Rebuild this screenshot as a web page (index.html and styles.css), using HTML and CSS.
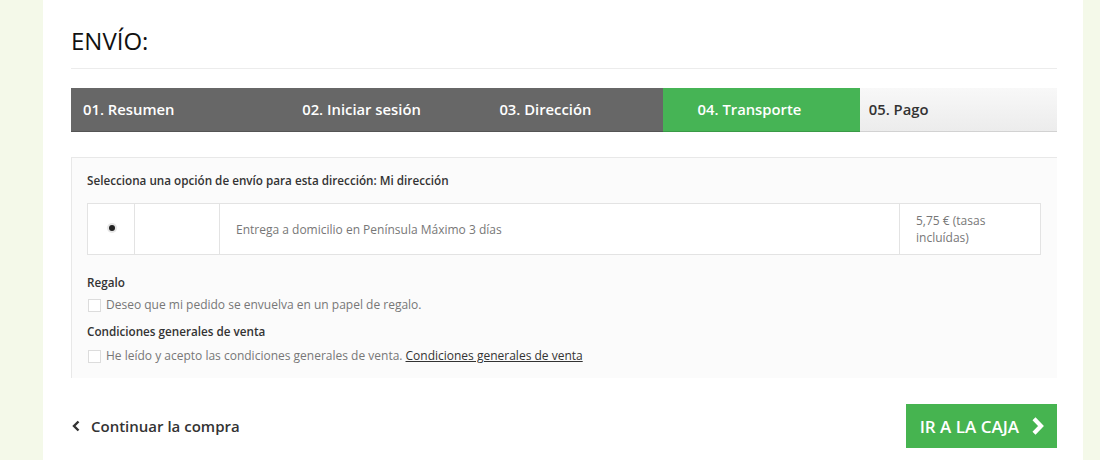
FILE: index.html
```html
<!DOCTYPE html>
<html lang="es">
<head>
  <meta charset="UTF-8" />
  <title>Envío</title>
  <link rel="stylesheet" href="styles.css">
</head>
<body>
  <div class="page">
    <h1 class="page-heading">ENVÍO:</h1>

    <ul class="steps">
      <li class="step step-first">01. Resumen</li>
      <li class="step">02. Iniciar sesión</li>
      <li class="step">03. Dirección</li>
      <li class="step step-current">04. Transporte</li>
      <li class="step step-todo">05. Pago</li>
    </ul>

    <div class="delivery-box">
      <p class="carrier-title">Selecciona una opción de envío para esta dirección: Mi dirección</p>

      <table class="carrier-table">
        <tr>
          <td class="col-radio"><span class="radio"></span></td>
          <td class="col-logo"></td>
          <td class="col-desc">Entrega a domicilio en Península Máximo 3 días</td>
          <td class="col-price">5,75 € (tasas incluídas)</td>
        </tr>
      </table>

      <p class="box-label">Regalo</p>
      <label class="check-row"><span class="checkbox"></span>Deseo que mi pedido se envuelva en un papel de regalo.</label>

      <p class="box-label">Condiciones generales de venta</p>
      <label class="check-row"><span class="checkbox"></span>He leído y acepto las condiciones generales de venta. <a href="#">Condiciones generales de venta</a></label>
    </div>

    <div class="cart-nav">
      <a class="back-link" href="#">
        <svg width="10" height="12" viewBox="0 0 10 12"><path d="M7.5 1.5 L3 6 L7.5 10.5" fill="none" stroke="#333" stroke-width="2.4"/></svg>
        Continuar la compra
      </a>
      <a class="checkout-btn" href="#">
        IR A LA CAJA
        <svg width="14" height="18" viewBox="0 0 14 18"><path d="M3 1.8 L10 9 L3 16.2" fill="none" stroke="#fff" stroke-width="4.2"/></svg>
      </a>
    </div>
  </div>
</body>
</html>
```

FILE: styles.css
```css
body {
  margin: 0;
  background: #f4f9e9;
  font-family: 'Open Sans', sans-serif;
  color: #333;
}

.page {
  margin-left: 43px;
  width: 1040px;
  height: 460px;
  box-sizing: border-box;
  padding: 0 26px 0 28px;
  background: #fff;
}

.page-heading {
  margin: 0;
  padding: 26px 0 12px;
  font-size: 24px;
  line-height: 30px;
  font-weight: 400;
  color: #111;
  border-bottom: 1px solid #ececec;
}

.steps {
  list-style: none;
  margin: 19px 0 0;
  padding: 0;
  display: flex;
}

.step {
  flex: 0 0 20%;
  box-sizing: border-box;
  height: 44px;
  line-height: 43px;
  padding-left: 34px;
  font-size: 14.8px;
  font-weight: 600;
  color: #fff;
  background: #676767;
  border-bottom: 1px solid #555;
  white-space: nowrap;
}

.step-first {
  padding-left: 12px;
}

.step-current {
  padding-left: 35px;
  background: #46b455;
  border-bottom-color: #3a9a47;
}

.step-todo {
  padding-left: 9px;
  color: #333;
  background: linear-gradient(#f8f8f8, #ececec);
  border-bottom-color: #d2d2d2;
}

.delivery-box {
  margin-top: 25px;
  padding: 13px 16px 13px 15px;
  background: #fbfbfb;
  border-top: 1px solid #e8e8e8;
  border-left: 1px solid #e8e8e8;
}

.carrier-title {
  margin: 0;
  font-size: 11.7px;
  line-height: 18px;
  font-weight: 600;
  color: #333;
}

.carrier-table {
  width: 100%;
  margin-top: 14px;
  border-collapse: collapse;
  background: #fff;
}

.carrier-table td {
  height: 50px;
  border: 1px solid #e3e3e3;
  font-size: 12px;
  line-height: 17px;
  color: #777;
  padding: 0 16px;
}

.col-radio {
  width: 47px;
  box-sizing: border-box;
  padding: 0 0 5px !important;
  text-align: center;
}

.col-logo {
  width: 85px;
  box-sizing: border-box;
}

.col-price {
  width: 141px;
  box-sizing: border-box;
}

.radio {
  display: inline-block;
  width: 6px;
  height: 6px;
  margin-left: 1px;
  border-radius: 50%;
  background: #222;
  box-shadow: 0 0 0 2px #e6e6e6;
  vertical-align: middle;
}

.box-label {
  margin: 18px 0 0;
  font-size: 11.7px;
  line-height: 18px;
  font-weight: 600;
  color: #333;
}

.box-label + .check-row {
  margin-top: 5px;
}

.check-row + .box-label {
  margin-top: 8px;
}

.check-row {
  display: flex;
  align-items: center;
  font-size: 12px;
  line-height: 18px;
  color: #777;
}

.check-row a {
  color: #333;
  text-decoration: underline;
  margin-left: 3px;
}

.checkbox {
  width: 11px;
  height: 11px;
  margin: 0 5px 0 1px;
  border: 1px solid #dcdcdc;
  background: #fff;
}

.delivery-box .check-row:last-child {
  margin-top: 7px;
}

.cart-nav {
  display: flex;
  justify-content: space-between;
  align-items: center;
  margin-top: 26px;
}

.back-link {
  display: flex;
  align-items: center;
  gap: 10px;
  font-size: 15px;
  font-weight: 600;
  color: #333;
  text-decoration: none;
}

.checkout-btn {
  display: flex;
  align-items: center;
  gap: 12px;
  height: 44px;
  padding: 0 12px 0 14px;
  background: #46b450;
  color: #fff;
  font-size: 17px;
  font-weight: 600;
  text-decoration: none;
}
```
